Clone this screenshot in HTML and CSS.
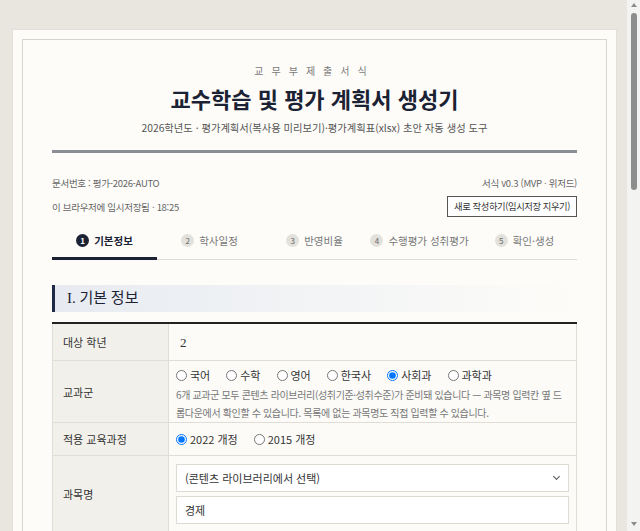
FILE: index.html
```html
<!DOCTYPE html>
<html lang="ko">
<head>
    <meta charset="UTF-8">
    <meta name="viewport" content="width=device-width, initial-scale=1.0">
    <title>교수학습 및 평가 계획서 생성기</title>
    <link rel="stylesheet" href="styles.css">
</head>
<body>
    <div class="sheet">
        <div class="frame">
            <header class="doc-head">
                <p class="kicker">교무부제출서식</p>
                <h1>교수학습 및 평가 계획서 생성기</h1>
                <p class="sub">2026학년도 · 평가계획서(복사용 미리보기)·평가계획표(xlsx) 초안 자동 생성 도구</p>
            </header>

            <div class="meta">
                <div class="meta-row">
                    <span>문서번호 : 평가-2026-AUTO</span>
                    <span>서식 v0.3 (MVP · 위저드)</span>
                </div>
                <div class="meta-row">
                    <span>이 브라우저에 임시저장됨 · 18:25</span>
                    <button class="btn-reset" type="button">새로 작성하기(임시저장 지우기)</button>
                </div>
            </div>

            <nav class="steps">
                <div class="step active"><span class="num">1</span>기본정보</div>
                <div class="step"><span class="num">2</span>학사일정</div>
                <div class="step"><span class="num">3</span>반영비율</div>
                <div class="step"><span class="num">4</span>수행평가 성취평가</div>
                <div class="step"><span class="num">5</span>확인·생성</div>
            </nav>

            <h2 class="section-title"><span class="roman">I.</span> 기본 정보</h2>

            <table class="form-table">
                <tr class="row-grade">
                    <th>대상 학년</th>
                    <td><span class="value">2</span></td>
                </tr>
                <tr>
                    <th>교과군</th>
                    <td class="cell-pad">
                        <div class="radios">
                            <label><input type="radio" name="group"> 국어</label>
                            <label><input type="radio" name="group"> 수학</label>
                            <label><input type="radio" name="group"> 영어</label>
                            <label><input type="radio" name="group"> 한국사</label>
                            <label><input type="radio" name="group" checked> 사회과</label>
                            <label><input type="radio" name="group"> 과학과</label>
                        </div>
                        <p class="help">6개 교과군 모두 콘텐츠 라이브러리(성취기준·성취수준)가 준비돼 있습니다 — 과목명 입력칸 옆 드롭다운에서 확인할 수 있습니다. 목록에 없는 과목명도 직접 입력할 수 있습니다.</p>
                    </td>
                </tr>
                <tr class="row-course">
                    <th>적용 교육과정</th>
                    <td>
                        <div class="radios">
                            <label><input type="radio" name="course" checked> 2022 개정</label>
                            <label><input type="radio" name="course"> 2015 개정</label>
                        </div>
                    </td>
                </tr>
                <tr>
                    <th>과목명</th>
                    <td class="cell-fields">
                        <div class="select-wrap">
                            <select class="field">
                                <option>(콘텐츠 라이브러리에서 선택)</option>
                            </select>
                        </div>
                        <input class="field" type="text" value="경제">
                    </td>
                </tr>
                <tr>
                    <th>담당 교사</th>
                    <td class="cell-fields">
                        <input class="field" type="text" value="">
                    </td>
                </tr>
                <tr>
                    <th>학기</th>
                    <td class="cell-fields">
                        <input class="field" type="text" value="1학기">
                    </td>
                </tr>
            </table>
        </div>
    </div>

    <!-- window scrollbar as it shows in the capture -->
    <div class="scrollbar" aria-hidden="true">
        <span class="arrow up"></span>
        <span class="thumb"></span>
        <span class="arrow down"></span>
    </div>
</body>
</html>
```

FILE: styles.css
```css
body {
    margin: 0;
    padding: 29px 23px 40px 12px;
    background: #e9e6e0;
    font-family: 'Noto Sans CJK KR', 'Noto Sans', sans-serif;
    color: #333;
}
.sheet {
    background: #fdfcf9;
    border: 1px solid #e2dfd8;
    padding: 9px;
}
.frame {
    border: 1px solid #d8d5ce;
    padding: 24px 29px 30px;
}

/* header */
.doc-head {
    text-align: center;
}
.kicker {
    margin: 0;
    font-size: 10px;
    letter-spacing: 8px;
    color: #7a7a7a;
    line-height: 14px;
}
.doc-head h1 {
    margin: 5px 0 0;
    font-size: 22px;
    line-height: 30px;
    color: #1b2233;
}
.sub {
    margin: 8px 0 0;
    font-size: 10.3px;
    line-height: 14px;
    color: #555;
}

.meta {
    margin-top: 15px;
    border-top: 3px solid #8b8e94;
    padding-top: 23px;
    font-size: 9.5px;
    letter-spacing: -0.3px;
    color: #666;
}
.meta-row {
    display: flex;
    justify-content: space-between;
    align-items: center;
    line-height: 14px;
}
.meta-row + .meta-row {
    margin-top: 6px;
}
.btn-reset {
    font-family: inherit;
    font-size: 9.3px;
    letter-spacing: -0.4px;
    color: #333;
    background: #fff;
    border: 1px solid #555;
    padding: 3px 6px 4px;
    line-height: 12px;
}

/* steps */
.steps {
    display: flex;
    margin-top: 13px;
    border-bottom: 1px solid #dcdbd6;
}
.step {
    flex: 1;
    text-align: center;
    font-size: 10.5px;
    color: #777;
    padding: 3px 0 9px;
    margin-bottom: -1px;
    border-bottom: 3px solid transparent;
}
.step.active {
    color: #1b2233;
    font-weight: bold;
    border-bottom-color: #1b2233;
}
.num {
    display: inline-block;
    width: 13px;
    height: 13px;
    line-height: 13px;
    border-radius: 50%;
    background: #e3e1db;
    color: #666;
    font-size: 8px;
    margin-right: 5px;
    vertical-align: 1px;
}
.step.active .num {
    background: #1b2233;
    color: #fff;
}

/* section */
.section-title {
    margin: 25px 0 0;
    padding: 4px 12px;
    border-left: 3px solid #1f2a44;
    background: linear-gradient(90deg, #e7ebf1, rgba(231, 235, 241, 0));
    font-family: 'Liberation Serif', 'Noto Sans CJK KR', serif;
    font-size: 15px;
    font-weight: normal;
    line-height: 19px;
    color: #1b2233;
}

/* form table */
.form-table {
    width: 100%;
    margin-top: 10px;
    border-collapse: collapse;
    border-top: 2px solid #222;
    font-size: 11px;
}
.form-table th,
.form-table td {
    border: 1px solid #e0ddd6;
    text-align: left;
    vertical-align: middle;
}
.form-table tr:first-child th,
.form-table tr:first-child td {
    border-top: 0;
}
.form-table th {
    width: 95px;
    padding: 0 10px;
    background: #f2f0eb;
    font-weight: normal;
    color: #333;
}
.form-table td {
    padding: 0 7px;
    background: #fcfbf8;
}
.row-grade th,
.row-grade td {
    height: 36px;
}
.value {
    font-family: 'Liberation Serif', serif;
    font-size: 13px;
    padding-left: 4px;
}
.row-course td,
.row-course th {
    height: 32px;
}
.form-table .cell-pad {
    padding-top: 6px;
    padding-bottom: 0;
}
.radios {
    display: flex;
    gap: 16px;
    line-height: 16px;
}
.radios label {
    display: flex;
    align-items: center;
    gap: 3px;
}
.radios input {
    margin: 0;
    width: 11px;
    height: 11px;
}
.help {
    margin: 3px 0 0;
    font-size: 10px;
    line-height: 18px;
    letter-spacing: -0.35px;
    word-break: break-all;
    color: #777;
}
.form-table .cell-fields {
    padding-top: 8px;
    padding-bottom: 8px;
}
.field {
    display: block;
    box-sizing: border-box;
    width: 100%;
    height: 28px;
    padding: 0 8px;
    border: 1px solid #dedbd4;
    background: #fff;
    font-family: inherit;
    font-size: 11px;
    color: #333;
}
.field + .field,
.select-wrap + .field {
    margin-top: 4px;
}
.select-wrap {
    position: relative;
}
.select-wrap select {
    appearance: none;
    -webkit-appearance: none;
}
.select-wrap::after {
    content: "";
    position: absolute;
    right: 10px;
    top: 10px;
    width: 4px;
    height: 4px;
    border-right: 1px solid #555;
    border-bottom: 1px solid #555;
    transform: rotate(45deg);
}

/* fake window scrollbar */
.scrollbar {
    position: fixed;
    top: 0;
    right: 0;
    bottom: 0;
    width: 13px;
    background: #f3f3f2;
}
.scrollbar .thumb {
    position: absolute;
    left: 4px;
    top: 13px;
    width: 6px;
    height: 177px;
    border-radius: 3px;
    background: #8d8d8d;
}
.scrollbar .arrow {
    position: absolute;
    left: 4px;
    width: 0;
    height: 0;
    border-left: 3px solid transparent;
    border-right: 3px solid transparent;
}
.scrollbar .up {
    top: 3px;
    border-bottom: 4px solid #8d8d8d;
}
.scrollbar .down {
    bottom: 5px;
    border-top: 4px solid #8d8d8d;
}
```
